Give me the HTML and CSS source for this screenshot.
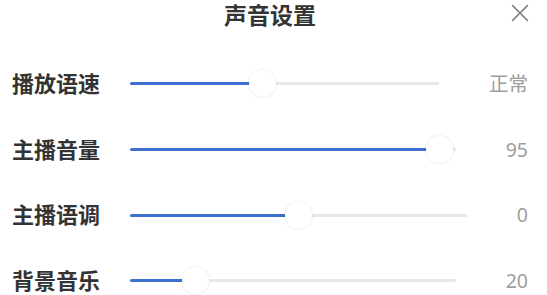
FILE: index.html
```html
<!DOCTYPE html>
<html lang="zh-CN">
<head>
<meta charset="utf-8">
<title>声音设置</title>
<link rel="stylesheet" href="styles.css">
</head>
<body>
<div class="panel">
  <div class="header">
    <div class="title">声音设置</div>
    <button class="close" aria-label="关闭">
      <svg width="18" height="18" viewBox="0 0 18 18"><path d="M1.5 1.5 L16.5 16.5 M16.5 1.5 L1.5 16.5" stroke="#7a7a7a" stroke-width="1.6" fill="none" stroke-linecap="round"/></svg>
    </button>
  </div>
  <div class="rows">
    <div class="row">
      <div class="label">播放语速</div>
      <div class="slider"><div class="fill" style="width:43%"></div><div class="thumb" style="left:43%"></div></div>
      <div class="value">正常</div>
    </div>
    <div class="row">
      <div class="label">主播音量</div>
      <div class="slider"><div class="fill" style="width:95%"></div><div class="thumb" style="left:95%"></div></div>
      <div class="value">95</div>
    </div>
    <div class="row">
      <div class="label">主播语调</div>
      <div class="slider"><div class="fill" style="width:50%"></div><div class="thumb" style="left:50%"></div></div>
      <div class="value">0</div>
    </div>
    <div class="row">
      <div class="label">背景音乐</div>
      <div class="slider"><div class="fill" style="width:20%"></div><div class="thumb" style="left:20%"></div></div>
      <div class="value">20</div>
    </div>
  </div>
</div>
</body>
</html>
```
FILE: styles.css
```css
* { box-sizing: border-box; }
html, body { margin: 0; padding: 0; background: #fff; }
body {
  width: 547px;
  height: 295px;
  overflow: hidden;
  font-family: "Noto Sans CJK SC", "Noto Sans", sans-serif;
}
.panel { padding: 0 19px 0 12px; }
.header {
  position: relative;
  height: 29px;
  display: flex;
  align-items: center;
  justify-content: center;
}
.title {
  font-size: 23px;
  font-weight: 700;
  color: #333;
  line-height: 29px;
}
.close {
  position: absolute;
  right: -1px;
  top: 4px;
  padding: 0;
  border: 0;
  background: none;
  width: 18px;
  height: 18px;
  display: flex;
}
.rows { padding-top: 22px; }
.row {
  height: 65.7px;
  display: flex;
  align-items: center;
}
.label {
  flex: 0 0 118px;
  font-size: 22px;
  font-weight: 700;
  color: #333;
  line-height: 1;
  margin-top: -4px;
}
.slider {
  flex: 1;
  position: relative;
  height: 3px;
  background: #e8e8e8;
  border-radius: 2px;
  margin-right: 50px;
}
.fill {
  height: 3px;
  background: #3b6fd1;
  border-radius: 2px;
}
.thumb {
  position: absolute;
  top: 50%;
  width: 27px;
  height: 27px;
  margin: -13.5px 0 0 -13.5px;
  border-radius: 50%;
  background: #fff;
  box-shadow: 0 0 3px rgba(0,0,0,0.12);
}
.value {
  flex: none;
  font-family: "Noto Sans", "Noto Sans CJK SC", sans-serif;
  font-size: 19.5px;
  font-weight: 400;
  color: #9e9e9e;
  text-align: right;
  line-height: 1;
}
```
